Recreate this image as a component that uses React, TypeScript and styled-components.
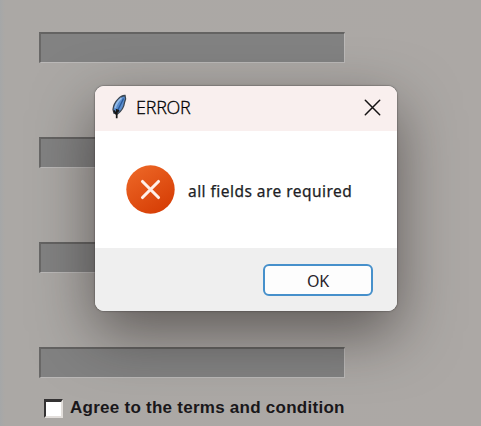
import React from "react";
import styled, { createGlobalStyle } from "styled-components";

const GlobalStyle = createGlobalStyle`
  * { box-sizing: border-box; }
  body { margin: 0; overflow: hidden; }
`;

const Page = styled.main`
  position: relative;
  width: 481px;
  height: 426px;
  padding: 32px 0 0 39px;
  overflow: hidden;
  background: linear-gradient(90deg, #a5a7a8 0, #aba8a5 5px, #aca8a5 100%);
`;

const Form = styled.form`
  display: flex;
  flex-direction: column;
  gap: 74px;
`;

const Field = styled.input`
  display: block;
  width: 306px;
  height: 31px;
  margin: 0;
  padding: 0 6px;
  border: solid;
  border-width: 2px 1px 1px 2px;
  border-color: #646362 #bbb9b8 #bbb9b8 #696867;
  border-radius: 0;
  outline: 0;
  background: #828282;
`;

const Agreement = styled.label`
  display: flex;
  align-items: center;
  gap: 7px;
  height: 20px;
  margin: 20px 0 0 5px;
  font: bold 17px/20px "Liberation Sans", Arial, sans-serif;
  letter-spacing: 0.26px;
  white-space: nowrap;
  color: #19171a;
`;

const Checkbox = styled.input`
  appearance: none;
  flex: none;
  width: 19px;
  height: 19px;
  margin: 0;
  border: solid;
  border-width: 3px 2px 2px 2px;
  border-color: #343233 #e2dedb #e2dedb #343233;
  background: #fff;
`;

const Dialog = styled.section`
  position: absolute;
  left: 95px;
  top: 86px;
  display: grid;
  grid-template-rows: 45px 117px 63px;
  width: 302px;
  height: 225px;
  border-radius: 9px;
  background: #fff;
  box-shadow: 0 0 0 1px rgba(60, 56, 54, 0.2), 0 0 3px rgba(40, 36, 34, 0.2),
    0 22px 60px 0 rgba(25, 20, 18, 0.52);
`;

const TitleBar = styled.header`
  display: flex;
  align-items: center;
  padding: 0 16px;
  border-radius: 9px 9px 0 0;
  background: #f9efee;
`;

const Title = styled.h1`
  flex: 1;
  margin: 0 0 4px 8px;
  font: 300 18px/24px "Open Sans", "Noto Sans", sans-serif;
  letter-spacing: -0.25px;
  color: #000;
  -webkit-text-stroke: 0.3px #000;
`;

const CloseButton = styled.button`
  display: flex;
  padding: 0;
  border: 0;
  background: none;
  margin-bottom: 2px;
`;

const Message = styled.div`
  display: flex;
  align-items: center;
  gap: 13px;
  padding-left: 31px;
`;

const MessageText = styled.p`
  margin: 3px 0 0;
  font: 400 15.5px/22px "Noto Sans", sans-serif;
  letter-spacing: 0.46px;
  white-space: nowrap;
  color: #211e25;
  -webkit-text-stroke: 0.25px #211e25;
`;

const Actions = styled.footer`
  display: flex;
  justify-content: flex-end;
  padding: 16px 24px 0 0;
  border-radius: 0 0 9px 9px;
  background: #efefef;
`;

const OkButton = styled.button`
  width: 110px;
  height: 32px;
  padding: 2px 0 0;
  border: 2px solid #4690cb;
  border-radius: 6px;
  background: #fdfdfd;
  font: 400 16px/22px "Noto Sans", sans-serif;
  letter-spacing: -0.2px;
  color: #29232b;
`;

const FeatherIcon = styled.svg`
  margin-bottom: 3px;
`;

const Feather = () => (
  <FeatherIcon width="17" height="26" viewBox="0 0 17 26" aria-hidden="true">
    <path d="M14 1.500C11.500 1.400 9 3 7 5.300C4 8.300 2.300 12 2 15.500L3 19.300L6.500 20C10.500 17 13 13 13.500 8.500L14.600 5Z" fill="#5a8dce" stroke="#3c4651" strokeWidth="1.300" />
    <path d="M10.500 4C7.500 6.500 5 10 4.200 14" fill="none" stroke="#94bce9" strokeWidth="1.700" />
    <path d="M12.500 4.500C10.500 9 7.500 14.500 5.800 18" fill="none" stroke="#28599a" strokeWidth="1.300" />
    <path d="M2.800 16.500l2 3 3.200-3.400M5.700 15v9.300" fill="none" stroke="#171716" strokeWidth="1.700" />
  </FeatherIcon>
);

const ErrorIcon = () => (
  <svg width="49" height="49" viewBox="0 0 49 49" aria-hidden="true">
    <defs>
      <linearGradient id="errorFill" x1="0.15" y1="0.1" x2="0.75" y2="1">
        <stop stopColor="#eb6424" />
        <stop offset="1" stopColor="#d63d05" />
      </linearGradient>
    </defs>
    <circle cx="24.500" cy="24.500" r="24.200" fill="url(#errorFill)" />
    <path d="M16.500 16.500l16 16m0-16l-16 16" stroke="#fff0e9" strokeWidth="3.100" strokeLinecap="round" />
  </svg>
);

export default function App() {
  return (
    <>
      <GlobalStyle />
      <Page>
        <Form>
          {[1, 2, 3, 4].map((id) => (
            <Field key={id} aria-label={`Field ${id}`} />
          ))}
        </Form>
        <Agreement>
          <Checkbox type="checkbox" />
          Agree to the terms and condition
        </Agreement>
        <Dialog role="alertdialog" aria-labelledby="dialogTitle">
          <TitleBar>
            <Feather />
            <Title id="dialogTitle">ERROR</Title>
            <CloseButton aria-label="Close">
              <svg width="17" height="17" viewBox="0 0 17 17">
                <path d="M1.300 1.300l14.400 14.400m0-14.400l-14.400 14.400" stroke="#151313" strokeWidth="1.500" strokeLinecap="round" />
              </svg>
            </CloseButton>
          </TitleBar>
          <Message>
            <ErrorIcon />
            <MessageText>all fields are required</MessageText>
          </Message>
          <Actions>
            <OkButton>OK</OkButton>
          </Actions>
        </Dialog>
      </Page>
    </>
  );
}
